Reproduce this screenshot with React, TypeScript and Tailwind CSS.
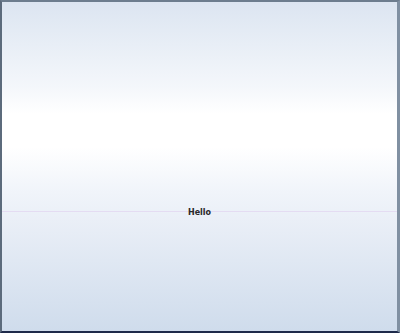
export default function App() {
  return (
    <div className="w-[400px] h-[333px] bg-[#e8eef6]">
      <div className="w-full h-full border-t-2 border-l-2 border-r-[3px] border-b-2 border-t-[#6d7d8e] border-l-[#5c6b7c] border-r-[#8090a2] border-b-[#1e2a4a]">
        <div className="relative w-full h-full bg-[linear-gradient(to_bottom,#dce5f1_0%,#f4f7fb_26%,#ffffff_34%,#ffffff_44%,#f0f4fa_58%,#eaeff7_66%,#cfdcec_100%)] flex justify-center pt-[207px]">
          <div className="absolute left-0 right-0 top-[209px] h-px bg-[#e4dcf2]" />
          <span className="relative h-[8px] text-[8px] font-bold text-[#2a2a2a] font-['DejaVu_Sans',sans-serif] leading-none">Hello</span>
        </div>
      </div>
    </div>
  );
}
